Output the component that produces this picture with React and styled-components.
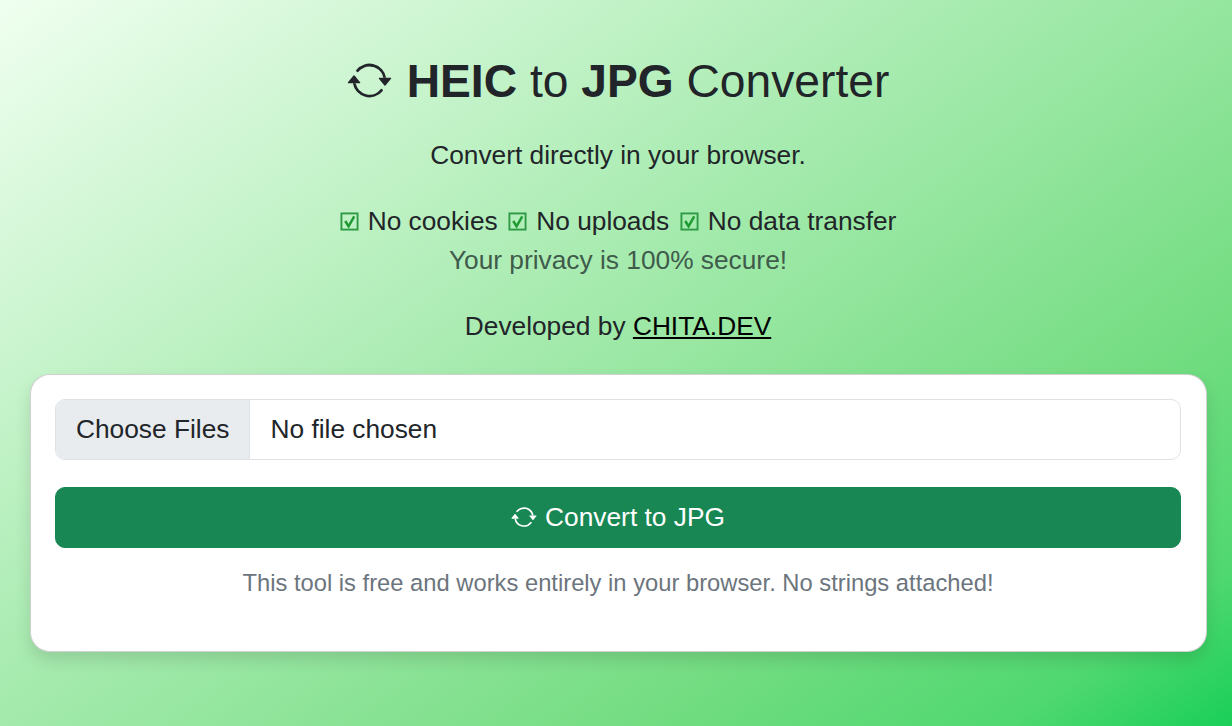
import { createGlobalStyle } from "styled-components";
import styled from "styled-components";
import { BsArrowRepeat } from "react-icons/bs";

const GlobalStyle = createGlobalStyle`
  * {
    box-sizing: border-box;
  }

  html,
  body {
    margin: 0;
    padding: 0;
  }

  body {
    min-height: 100vh;
    background: linear-gradient(145deg, #f0fff0 0%, #75dd83 73%, #50d870 90%, #19cf57 100%);
    background-attachment: fixed;
    color: #212529;
    font-family: "Liberation Sans", Arial, sans-serif;
    font-size: 26.3px;
    line-height: 1.5;
    overflow: hidden;
  }
`;

const Page = styled.main`
  height: 726px;
  padding: 51px 26px 0 30px;
`;

const Intro = styled.header`
  text-align: center;
  margin-bottom: 29px;
`;

const Title = styled.h1`
  margin: 0 0 25px;
  font-size: 46.2px;
  font-weight: 400;
  line-height: 60px;
  display: flex;
  justify-content: center;
  align-items: center;
  gap: 15px;

  strong {
    font-weight: 700;
  }

  svg {
    width: 45px;
    height: 45px;
    margin-bottom: 2px;
  }
`;

const Line = styled.p`
  margin: 0 0 ${(p) => p.$gap || 0}px;
  line-height: 38px;
  color: ${(p) => (p.$muted ? "#3f5b4b" : "#212529")};
`;

const Perks = styled(Line)`
  display: flex;
  justify-content: center;
  align-items: center;
  gap: 10.5px;
  margin-bottom: 1px;
`;

const Perk = styled.span`
  display: inline-flex;
  align-items: center;
  gap: 9px;

  svg {
    width: 19px;
    height: 19px;
  }
`;

const DevLink = styled.a`
  color: #000;
  text-decoration: underline;
`;

const Card = styled.section`
  width: 1177px;
  height: 278px;
  padding: 24px 25px 24px 24px;
  background: #fff;
  border: 1px solid rgba(0, 0, 0, 0.18);
  border-radius: 20px;
  box-shadow: 0 8px 16px rgba(0, 0, 0, 0.12);
`;

const FileInput = styled.input`
  display: block;
  width: 100%;
  height: 61px;
  padding: 0 21px;
  margin-bottom: 27px;
  background: #fff;
  border: 1px solid #dee2e6;
  border-radius: 10px;
  color: #212529;
  font: inherit;
  overflow: hidden;

  &::file-selector-button {
    height: 61px;
    margin: -1px 20px 0 -21px;
    padding: 0 20px;
    background: #e9ecef;
    border: 0;
    border-right: 1px solid #dee2e6;
    border-radius: 0;
    color: #212529;
    font: inherit;
  }
`;

const ConvertButton = styled.button`
  width: 100%;
  height: 61px;
  display: flex;
  justify-content: center;
  align-items: center;
  gap: 8px;
  background: #198754;
  border: 1px solid #198754;
  border-radius: 10px;
  color: #fff;
  font: inherit;

  svg {
    width: 26px;
    height: 26px;
    margin-bottom: 2px;
  }
`;

const Note = styled.p`
  margin: 16px 0 0;
  text-align: center;
  font-size: 23.75px;
  line-height: 38px;
  color: #6c757d;
`;

function CheckBox() {
  return (
    <svg viewBox="0 0 20 20" aria-hidden="true">
      <rect x="1.5" y="1.5" width="17" height="17" fill="none" stroke="#2f9a45" strokeWidth="2" />
      <path d="M5.5 9.5 L9 15 L15 4.5" fill="none" stroke="#1f9a33" strokeWidth="2.6" />
    </svg>
  );
}

function App() {
  return (
    <>
      <GlobalStyle />
      <Page>
        <Intro>
          <Title>
            <BsArrowRepeat />
            <span>
              <strong>HEIC</strong> to <strong>JPG</strong> Converter
            </span>
          </Title>
          <Line $gap={28}>Convert directly in your browser.</Line>
          <Perks>
            <Perk><CheckBox />No cookies</Perk>
            <Perk><CheckBox />No uploads</Perk>
            <Perk><CheckBox />No data transfer</Perk>
          </Perks>
          <Line $muted $gap={28}>Your privacy is 100% secure!</Line>
          <Line>
            Developed by <DevLink href="#">CHITA.DEV</DevLink>
          </Line>
        </Intro>
        <Card>
          <FileInput type="file" multiple />
          <ConvertButton type="button">
            <BsArrowRepeat />
            Convert to JPG
          </ConvertButton>
          <Note>This tool is free and works entirely in your browser. No strings attached!</Note>
        </Card>
      </Page>
    </>
  );
}

export default App;
